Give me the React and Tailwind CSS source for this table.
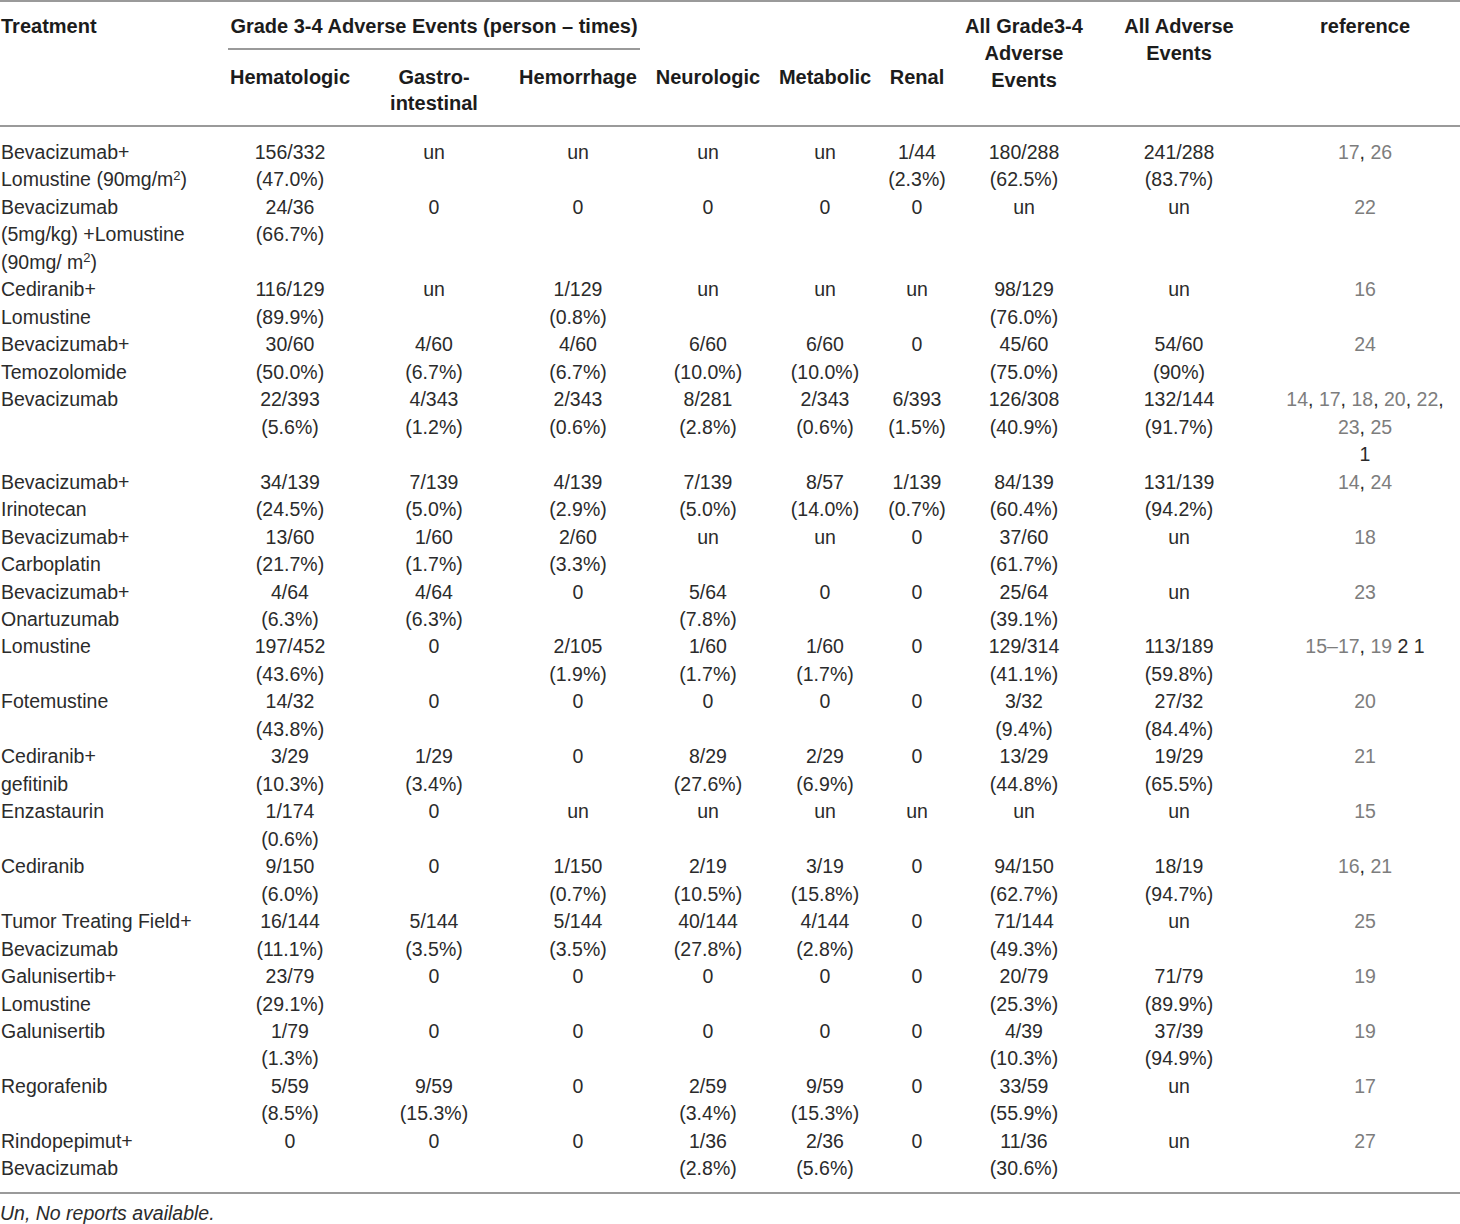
import React from 'react'

const rows = [
  {
    t: <>Bevacizumab+<br />Lomustine (90mg/m<sup className="text-[13px]">2</sup>)</>,
    v: ['156/332|(47.0%)', 'un', 'un', 'un', 'un', '1/44|(2.3%)', '180/288|(62.5%)', '241/288|(83.7%)'],
    r: [['17', '26']],
  },
  {
    t: <>Bevacizumab<br />(5mg/kg) +Lomustine<br />(90mg/ m<sup className="text-[13px]">2</sup>)</>,
    v: ['24/36|(66.7%)', '0', '0', '0', '0', '0', 'un', 'un'],
    r: [['22']],
  },
  {
    t: <>Cediranib+<br />Lomustine</>,
    v: ['116/129|(89.9%)', 'un', '1/129|(0.8%)', 'un', 'un', 'un', '98/129|(76.0%)', 'un'],
    r: [['16']],
  },
  {
    t: <>Bevacizumab+<br />Temozolomide</>,
    v: ['30/60|(50.0%)', '4/60|(6.7%)', '4/60|(6.7%)', '6/60|(10.0%)', '6/60|(10.0%)', '0', '45/60|(75.0%)', '54/60|(90%)'],
    r: [['24']],
  },
  {
    t: <>Bevacizumab</>,
    v: ['22/393|(5.6%)', '4/343|(1.2%)', '2/343|(0.6%)', '8/281|(2.8%)', '2/343|(0.6%)', '6/393|(1.5%)', '126/308|(40.9%)', '132/144|(91.7%)'],
    r: [['14', '17', '18', '20', '22', ''], ['23', '25']],
    extra: '1',
  },
  {
    t: <>Bevacizumab+<br />Irinotecan</>,
    v: ['34/139|(24.5%)', '7/139|(5.0%)', '4/139|(2.9%)', '7/139|(5.0%)', '8/57|(14.0%)', '1/139|(0.7%)', '84/139|(60.4%)', '131/139|(94.2%)'],
    r: [['14', '24']],
  },
  {
    t: <>Bevacizumab+<br />Carboplatin</>,
    v: ['13/60|(21.7%)', '1/60|(1.7%)', '2/60|(3.3%)', 'un', 'un', '0', '37/60|(61.7%)', 'un'],
    r: [['18']],
  },
  {
    t: <>Bevacizumab+<br />Onartuzumab</>,
    v: ['4/64|(6.3%)', '4/64|(6.3%)', '0', '5/64|(7.8%)', '0', '0', '25/64|(39.1%)', 'un'],
    r: [['23']],
  },
  {
    t: <>Lomustine</>,
    v: ['197/452|(43.6%)', '0', '2/105|(1.9%)', '1/60|(1.7%)', '1/60|(1.7%)', '0', '129/314|(41.1%)', '113/189|(59.8%)'],
    r: [['15–17', '19']],
    tail: ' 2 1',
  },
  {
    t: <>Fotemustine</>,
    v: ['14/32|(43.8%)', '0', '0', '0', '0', '0', '3/32|(9.4%)', '27/32|(84.4%)'],
    r: [['20']],
  },
  {
    t: <>Cediranib+<br />gefitinib</>,
    v: ['3/29|(10.3%)', '1/29|(3.4%)', '0', '8/29|(27.6%)', '2/29|(6.9%)', '0', '13/29|(44.8%)', '19/29|(65.5%)'],
    r: [['21']],
  },
  {
    t: <>Enzastaurin</>,
    v: ['1/174|(0.6%)', '0', 'un', 'un', 'un', 'un', 'un', 'un'],
    r: [['15']],
  },
  {
    t: <>Cediranib</>,
    v: ['9/150|(6.0%)', '0', '1/150|(0.7%)', '2/19|(10.5%)', '3/19|(15.8%)', '0', '94/150|(62.7%)', '18/19|(94.7%)'],
    r: [['16', '21']],
  },
  {
    t: <>Tumor Treating Field+<br />Bevacizumab</>,
    v: ['16/144|(11.1%)', '5/144|(3.5%)', '5/144|(3.5%)', '40/144|(27.8%)', '4/144|(2.8%)', '0', '71/144|(49.3%)', 'un'],
    r: [['25']],
  },
  {
    t: <>Galunisertib+<br />Lomustine</>,
    v: ['23/79|(29.1%)', '0', '0', '0', '0', '0', '20/79|(25.3%)', '71/79|(89.9%)'],
    r: [['19']],
  },
  {
    t: <>Galunisertib</>,
    v: ['1/79|(1.3%)', '0', '0', '0', '0', '0', '4/39|(10.3%)', '37/39|(94.9%)'],
    r: [['19']],
  },
  {
    t: <>Regorafenib</>,
    v: ['5/59|(8.5%)', '9/59|(15.3%)', '0', '2/59|(3.4%)', '9/59|(15.3%)', '0', '33/59|(55.9%)', 'un'],
    r: [['17']],
  },
  {
    t: <>Rindopepimut+<br />Bevacizumab</>,
    v: ['0', '0', '0', '1/36|(2.8%)', '2/36|(5.6%)', '0', '11/36|(30.6%)', 'un'],
    r: [['27']],
  },
]

const cols = 'grid grid-cols-[228px_124px_164px_124px_136px_98px_86px_128px_182px_190px]'

function RefLine({ refs, tail }) {
  return (
    <div className="whitespace-nowrap">
      {refs.map((n, i) => (
        <span key={i}>
          {i > 0 && <span className="text-[#2b2b2b]">, </span>}
          <span className="text-[#7d7d7d]">{n}</span>
        </span>
      ))}
      {tail && <span className="text-[#2b2b2b]">{tail}</span>}
    </div>
  )
}

export default function App() {
  return (
    <div className="w-[1460px] bg-white font-['Liberation_Sans',Arial,sans-serif] text-[#2b2b2b]">
      {/* header */}
      <div className={`${cols} grid-rows-[48px_75px] border-t-2 border-b-2 border-[#9a9a9a] text-[20px] font-bold text-[#1c1c1c] leading-[27px]`}>
        <div className="row-span-2 pt-[11px] pl-[1px]">Treatment</div>
        <div className="col-span-3 pt-[11px] border-b-2 border-[#9a9a9a] whitespace-nowrap text-center">
          Grade 3-4 Adverse Events (person – times)
        </div>
        <div className="col-start-5 row-start-2 pt-[14px] text-center leading-[26px]">Neurologic</div>
        <div className="col-start-6 row-start-2 pt-[14px] text-center leading-[26px]">Metabolic</div>
        <div className="col-start-7 row-start-2 pt-[14px] text-center leading-[26px]">Renal</div>
        <div className="col-start-8 row-start-1 row-span-2 pt-[11px] text-center">All Grade3-4<br />Adverse<br />Events</div>
        <div className="col-start-9 row-start-1 row-span-2 pt-[11px] text-center">All Adverse<br />Events</div>
        <div className="col-start-10 row-start-1 row-span-2 pt-[11px] text-center">reference</div>
        <div className="col-start-2 row-start-2 pt-[14px] text-center leading-[26px]">Hematologic</div>
        <div className="col-start-3 row-start-2 pt-[14px] text-center leading-[26px]">Gastro-<br />intestinal</div>
        <div className="col-start-4 row-start-2 pt-[14px] text-center leading-[26px]">Hemorrhage</div>
      </div>

      {/* body */}
      <div className={`${cols} pt-[12px] pb-[9px] border-b-2 border-[#9a9a9a] text-[19.5px] leading-[27.47px]`}>
        {rows.map((row, i) => (
          <React.Fragment key={i}>
            <div className="pl-[1px] whitespace-nowrap">{row.t}</div>
            {row.v.map((val, j) => (
              <div key={j} className="text-center">
                {val.split('|').map((line, k) => (
                  <div key={k}>{line}</div>
                ))}
              </div>
            ))}
            <div className="text-center">
              {row.r.map((refs, k) => (
                <RefLine key={k} refs={refs} tail={k === row.r.length - 1 ? row.tail : null} />
              ))}
              {row.extra && <div>{row.extra}</div>}
            </div>
          </React.Fragment>
        ))}
      </div>

      <div className="pt-[6px] text-[19.5px] leading-[27.5px] italic text-[#2b2b2b]">Un, No reports available.</div>
    </div>
  )
}
